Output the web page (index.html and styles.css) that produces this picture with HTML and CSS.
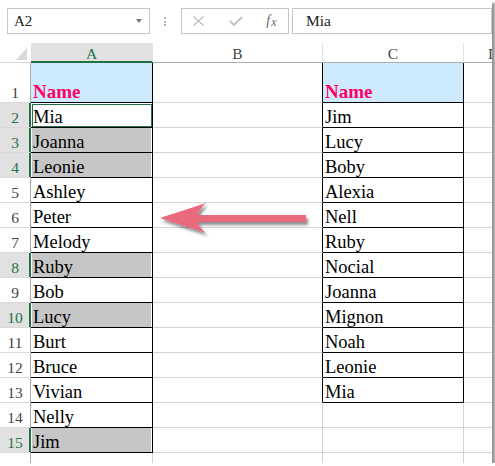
FILE: index.html
```html
<!DOCTYPE html>
<html>
<head>
<meta charset="utf-8">
<link rel="stylesheet" href="styles.css">
</head>
<body>
<div class="frame">
  <div class="toolbar">
    <div class="namebox"><span>A2</span><span class="caret"></span></div>
    <div class="dots"><i></i><i></i><i></i></div>
    <div class="fbtns">
      <svg class="ic-x" width="11" height="10" viewBox="0 0 11 10"><path d="M0.5 0.5 L10.5 9.5 M10.5 0.5 L0.5 9.5" stroke="#bdbdbd" stroke-width="1.2" fill="none"/></svg>
      <svg class="ic-ok" width="14" height="10" viewBox="0 0 14 10"><path d="M1 5 L5 9 L13 1" stroke="#c4c4c4" stroke-width="2" fill="none"/></svg>
      <span class="fx">f<span class="fxx">x</span></span>
    </div>
    <div class="formula">Mia</div>
  </div>
  <div class="sheet">
    <div class="corner"><div class="tri"></div></div>
    <div class="ch sel">A</div>
    <div class="ch">B</div>
    <div class="ch">C</div>
    <div class="ch">D</div>

    <div class="rh">1</div><div class="c t hd">Name</div><div class="c bt"></div><div class="c t hd">Name</div><div class="c"></div>
    <div class="rh sel">2</div><div class="c t act">Mia</div><div class="c bt"></div><div class="c t">Jim</div><div class="c"></div>
    <div class="rh sel">3</div><div class="c t g">Joanna</div><div class="c bt"></div><div class="c t">Lucy</div><div class="c"></div>
    <div class="rh sel">4</div><div class="c t g">Leonie</div><div class="c bt"></div><div class="c t">Boby</div><div class="c"></div>
    <div class="rh">5</div><div class="c t">Ashley</div><div class="c bt"></div><div class="c t">Alexia</div><div class="c"></div>
    <div class="rh">6</div><div class="c t">Peter</div><div class="c bt"></div><div class="c t">Nell</div><div class="c"></div>
    <div class="rh">7</div><div class="c t">Melody</div><div class="c bt"></div><div class="c t">Ruby</div><div class="c"></div>
    <div class="rh sel">8</div><div class="c t g">Ruby</div><div class="c bt"></div><div class="c t">Nocial</div><div class="c"></div>
    <div class="rh">9</div><div class="c t">Bob</div><div class="c bt"></div><div class="c t">Joanna</div><div class="c"></div>
    <div class="rh sel">10</div><div class="c t g">Lucy</div><div class="c bt"></div><div class="c t">Mignon</div><div class="c"></div>
    <div class="rh">11</div><div class="c t">Burt</div><div class="c bt"></div><div class="c t">Noah</div><div class="c"></div>
    <div class="rh">12</div><div class="c t">Bruce</div><div class="c bt"></div><div class="c t">Leonie</div><div class="c"></div>
    <div class="rh">13</div><div class="c t">Vivian</div><div class="c bt"></div><div class="c t">Mia</div><div class="c"></div>
    <div class="rh">14</div><div class="c t">Nelly</div><div class="c"></div><div class="c"></div><div class="c"></div>
    <div class="rh sel">15</div><div class="c t g">Jim</div><div class="c"></div><div class="c"></div><div class="c"></div>
    <div class="rh">16</div><div class="c"></div><div class="c"></div><div class="c"></div><div class="c"></div>
  </div>
  <svg class="arrow" width="492" height="463" viewBox="0 0 492 463">
    <defs>
      <filter id="sh" x="-20%" y="-50%" width="140%" height="200%">
        <feDropShadow dx="2" dy="3" stdDeviation="1.6" flood-color="#000" flood-opacity="0.45"/>
      </filter>
    </defs>
    <path d="M160 218 C178 212 194 207 206 203 C201 208 198 212 198 215 L306 215 L306 222 L198 222 C198 225 201 229 206 233 C194 229 178 224 160 218 Z" fill="#e96a7b" filter="url(#sh)"/>
  </svg>
</div>
</body>
</html>
```

FILE: styles.css
```css
html, body {
  margin: 0;
  padding: 0;
  background: #fff;
}

.frame {
  position: relative;
  width: 492px;
  height: 463px;
  overflow: hidden;
  background: #fff;
  box-shadow: 3px 3px 2px rgba(0, 0, 0, 0.42);
  font-family: "Liberation Serif", "Times New Roman", serif;
}

/* ---------- toolbar ---------- */
.toolbar {
  display: flex;
  align-items: stretch;
  height: 26px;
  margin: 8px 0 0 7px;
}

.namebox {
  box-sizing: border-box;
  width: 145px;
  height: 26px;
  border: 1px solid #c6c6c6;
  display: flex;
  align-items: center;
  padding-left: 6px;
  font-size: 15px;
  line-height: 24px;
  color: #222;
}

.caret {
  margin-left: auto;
  margin-right: 7px;
  width: 0;
  height: 0;
  border-left: 3px solid transparent;
  border-right: 3px solid transparent;
  border-top: 4px solid #777;
}

.dots {
  display: flex;
  flex-direction: column;
  justify-content: center;
  gap: 1.5px;
  margin-left: 14px;
  padding-top: 1px;
}

.dots i {
  display: block;
  width: 2px;
  height: 2px;
  background: #b3b3b3;
}

.fbtns {
  box-sizing: border-box;
  width: 109px;
  height: 26px;
  margin-left: 15px;
  border: 1px solid #c6c6c6;
  display: flex;
  align-items: center;
  padding-left: 11px;
}

.ic-x {
  display: block;
}

.ic-ok {
  display: block;
  margin-left: 25px;
}

.fx {
  margin-left: 23px;
  font-style: italic;
  font-size: 14px;
  color: #6a6a6a;
  line-height: 24px;
}

.fxx {
  font-size: 12px;
  position: relative;
  top: 1px;
  margin-left: 1px;
}

.formula {
  box-sizing: border-box;
  width: 200px;
  height: 26px;
  margin-left: 3px;
  border: 1px solid #c6c6c6;
  padding-left: 13px;
  font-size: 15.5px;
  line-height: 24px;
  color: #222;
  flex: none;
}

/* ---------- sheet ---------- */
.sheet {
  display: grid;
  grid-template-columns: 31px 122px 170px 141px 60px;
  grid-template-rows: 20px 40px repeat(15, 25px);
  margin-top: 9px;
}

.sheet > div {
  box-sizing: border-box;
}

.corner {
  border-bottom: 1px solid #d4d4d4;
  display: flex;
  justify-content: flex-end;
  align-items: flex-end;
  padding: 0 4px 2px 0;
}

.tri {
  width: 11px;
  height: 12px;
  background: #d9d9d9;
  clip-path: polygon(100% 0, 100% 100%, 0 100%);
}

.ch {
  border-right: 1px solid #e2e2e2;
  border-bottom: 1px solid #ababab;
  font-size: 15.5px;
  line-height: 19px;
  padding-top: 1px;
  text-align: center;
  color: #444;
}

.ch.sel {
  background: #e1e1e1;
  color: #217346;
  border-bottom: 2px solid #217346;
}

.rh {
  border-right: 1px solid #ababab;
  border-bottom: 1px solid #dadada;
  display: flex;
  align-items: flex-end;
  justify-content: center;
  font-size: 15.5px;
  line-height: 18px;
  color: #444;
}

.rh.sel {
  background: #e1e1e1;
  color: #217346;
  border-right-color: #217346;
  box-shadow: inset -1px 0 #217346;
}

.c {
  border-right: 1px solid #d4d4d4;
  border-bottom: 1px solid #d4d4d4;
  display: flex;
  align-items: flex-end;
  padding-left: 2px;
  font-size: 18.5px;
  line-height: 20px;
  color: #000;
  white-space: nowrap;
}

.c.t {
  border-right-color: #000;
  border-bottom-color: #000;
}

.c.bt {
  border-right-color: #000;
}

.c.hd {
  background: #cdebfd;
  color: #ff0066;
  font-weight: bold;
  font-size: 19px;
}

.c.g {
  background: #c6c6c6;
  box-shadow: inset 1px 0 #fff, inset -1px 0 #fff;
}

.c.act {
  outline: 1px solid #217346;
  outline-offset: -2px;
}

.arrow {
  position: absolute;
  left: 0;
  top: 0;
  pointer-events: none;
}
```
